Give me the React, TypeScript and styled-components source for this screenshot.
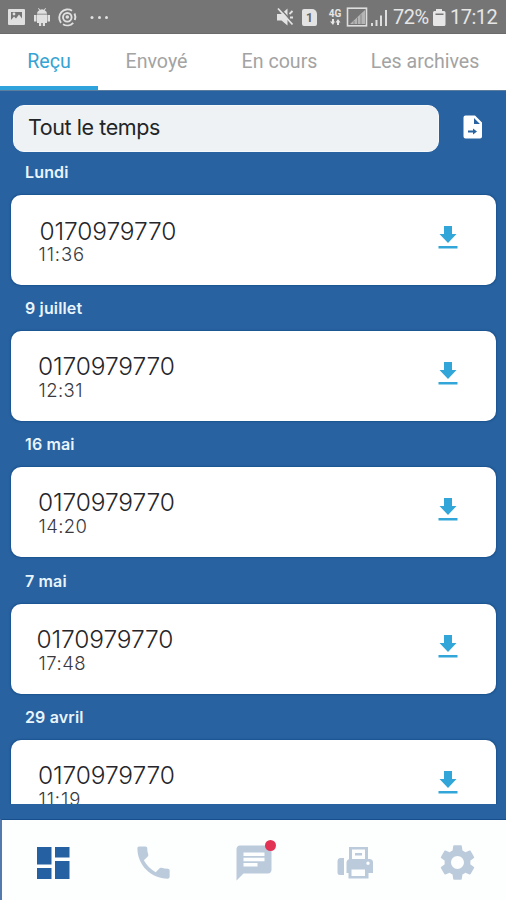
import React from 'react';
import styled, { createGlobalStyle } from 'styled-components';

const Global = createGlobalStyle`
  * { box-sizing: border-box; }
  body { margin: 0; background: #2862a0; font-family: Inter, "Noto Sans", sans-serif; }
`;

const Screen = styled.div`
  width: 506px;
  height: 900px;
  display: flex;
  flex-direction: column;
  overflow: hidden;
  background: #2862a0;
`;

const StatusBar = styled.header`
  height: 34px;
  flex: none;
  display: flex;
  align-items: center;
  justify-content: space-between;
  background: #757575;
  border-bottom: 1px solid #6b6b6b;
  color: #e6e6e6;
  font-family: Roboto, sans-serif;
`;

const StatusIcons = styled.svg`
  display: block;
  flex: none;
`;

const StatusRight = styled.div`
  display: flex;
  align-items: center;
  height: 34px;
`;

const StatusText = styled.span<{ $width: number }>`
  width: ${(p) => p.$width}px;
  font-size: 20px;
  line-height: 34px;
  padding-top: 1px;
  white-space: nowrap;
  letter-spacing: -0.5px;
`;

const Tabs = styled.nav`
  height: 57px;
  flex: none;
  display: flex;
  background: #fff;
  border-bottom: 1px solid #5c7d9e;
`;

const Tab = styled.div<{ $width: number; $active?: boolean }>`
  width: ${(p) => p.$width}px;
  height: 56px;
  display: flex;
  justify-content: center;
  font-family: Roboto, sans-serif;
  font-size: 19.6px;
  line-height: 55px;
  white-space: nowrap;
  color: ${(p) => (p.$active ? '#35a3d3' : '#a3a3a3')};
  border-bottom: ${(p) => (p.$active ? '4px solid #2fa3dc' : '0')};
`;

const FilterRow = styled.div`
  display: flex;
  align-items: center;
  padding: 14px 0 0 13px;
  gap: 21px;
  height: 61px;
  flex: none;
`;

const FilterField = styled.div`
  width: 426px;
  height: 47px;
  border-radius: 11px;
  background: #eef2f4;
  border: 1px solid #f6f9fb;
  padding-left: 14px;
  font-size: 21.5px;
  line-height: 42px;
  letter-spacing: -0.42px;
  color: #222528;
`;

const FileIcon = styled.svg`
  display: block;
  margin-bottom: 2px;
`;

const List = styled.main`
  height: 652px;
  flex: none;
  overflow: hidden;
  padding: 0 10px 0 11px;
`;

const Group = styled.section`
  height: 136.2px;
`;

const DateLabel = styled.h2`
  margin: 0;
  height: 43px;
  padding-left: 14px;
  font-size: 16px;
  font-weight: 600;
  line-height: 41px;
  letter-spacing: 0.15px;
  color: #e9f4fc;
`;

const Card = styled.article`
  height: 90px;
  display: flex;
  justify-content: space-between;
  background: #fff;
  border-radius: 10px;
  box-shadow: 0 0 1.5px 0.5px #1b5390;
  padding: 0 36px 0 27px;
`;

const Details = styled.div`
  padding-top: 21px;
`;

const PhoneNumber = styled.div<{ $dx: number; $dy: number }>`
  height: 28px;
  margin: ${(p) => p.$dy}px 0 ${(p) => -p.$dy}px ${(p) => p.$dx}px;
  font-size: 24.5px;
  font-weight: 300;
  line-height: 28px;
  letter-spacing: -0.12px;
  color: #26262a;
`;

const Time = styled.div<{ $spacing: number }>`
  padding-left: 0.5px;
  font-size: 18.5px;
  font-weight: 300;
  line-height: 20px;
  letter-spacing: ${(p) => p.$spacing}px;
  color: #3a3a3e;
`;

const DownloadIcon = styled.svg`
  display: block;
  margin-top: 30px;
  fill: #32a6d8;
`;

const BottomBar = styled.footer`
  margin-top: auto;
  height: 81px;
  flex: none;
  display: flex;
  background: #fdfefe;
  border-left: 2px solid #5479ad;
  border-top: 1px solid #164f8b;
`;

const NavItem = styled.div<{ $active?: boolean }>`
  flex: 1;
  position: relative;
  display: flex;
  justify-content: center;
  align-items: center;
  padding: 5px 0 0 1px;
  color: ${(p) => (p.$active ? '#2460a2' : '#bccbdc')};
`;

const Badge = styled.span`
  position: absolute;
  top: 20px;
  left: 61px;
  width: 11px;
  height: 11px;
  border-radius: 50%;
  background: #e23355;
`;

const NavIcon = styled.svg`
  display: block;
  fill: currentColor;
`;

const GearIcon = styled(NavIcon)`
  margin-left: 3px;
`;

const tabs = [
  { label: 'Reçu', width: 98, active: true },
  { label: 'Envoyé', width: 117 },
  { label: 'En cours', width: 129 },
  { label: 'Les archives', width: 162 },
];

const messages = [
  { date: 'Lundi', time: '11:36', dx: 1.5, dy: 0.5, spacing: 0.9 },
  { date: '9 juillet', time: '12:31', dx: 0, dy: -0.5, spacing: 0.4 },
  { date: '16 mai', time: '14:20', dx: 0, dy: -0.5, spacing: 0.4 },
  { date: '7 mai', time: '17:48', dx: -1.5, dy: 0.5, spacing: 0.5 },
  { date: '29 avril', time: '11:19', dx: 0, dy: 0.5, spacing: 0.9 },
];

function NotificationIcons() {
  return (
    <StatusIcons width="112" height="34" viewBox="0 0 112 34" fill="#e0e0e0">
      <path
        fillRule="evenodd"
        d="M9 9h15a1 1 0 0 1 1 1v14a1 1 0 0 1-1 1H9a1 1 0 0 1-1-1V10a1 1 0 0 1 1-1Zm2 3v8l3-3.500 2 2 3-4 3 4V12Z"
      />
      <circle cx="14" cy="14" r="1.4" />
      <path d="M37 14.500h10v8.500h-2v3h-2.200v-3h-1.600v3H39v-3h-2ZM34 15h2.500v6.500H34Zm13.500 0H50v6.500h-2.500ZM37 13.700a5 4 0 0 1 2.300-3.500L38 8.500l.6-.5 1.500 1.700a5 5 0 0 1 3.800 0L45.400 8l.6.5-1.300 1.700a5 4 0 0 1 2.300 3.500Z" />
      <g fill="none" stroke="#e0e0e0">
        <path strokeWidth="1.900" d="M61 22.800A8.300 8.300 0 0 1 72 10.700M74.500 13.500A8.300 8.300 0 0 1 74.800 20M73.200 22.800A8.300 8.300 0 0 1 63 24.300" />
        <circle cx="67.300" cy="17.300" r="4.300" strokeWidth="1.900" />
      </g>
      <circle cx="67.300" cy="17" r="1.800" />
      <circle cx="92" cy="17.500" r="1.500" />
      <circle cx="99.500" cy="17.500" r="1.500" />
      <circle cx="106.500" cy="17.500" r="1.500" />
    </StatusIcons>
  );
}

const SimBadge = styled.span`
  width: 15px;
  height: 17px;
  border-radius: 2px;
  border-top-right-radius: 5px;
  background: #e3e3e3;
  color: #666;
  font-size: 12px;
  font-weight: 700;
  line-height: 18px;
  text-align: center;
  margin: 1px 11px 0 8px;
`;

const NetworkBadge = styled.span`
  width: 14px;
  height: 20px;
  display: flex;
  flex-direction: column;
  align-items: center;
  font-size: 10px;
  font-weight: 700;
  line-height: 11px;
  margin: 3px 4px 0 0;
`;

function MuteIcon() {
  return (
    <StatusIcons width="18" height="34" viewBox="276 0 18 34" fill="#e3e3e3">
      <path d="M277 14h4.500l6-5.500v17l-6-5H277Z" />
      <path d="m279.500 8 14 15" stroke="#757575" strokeWidth="1.500" />
      <path d="m278 8.500 14.500 16M289.500 14l3-3M290 17.500h3" stroke="#e3e3e3" strokeWidth="1.800" />
    </StatusIcons>
  );
}

function SignalIcons() {
  return (
    <StatusIcons width="47" height="34" viewBox="346 0 47 34" fill="#dedede">
      <rect x="347.500" y="8.200" width="19" height="17.600" fill="none" stroke="#dedede" strokeWidth="1.600" />
      <path d="m350 24 15-14v14Z" opacity=".6" />
      <path d="M354 21v3M357.500 17.500V24M361 14.500V24" stroke="#757575" strokeWidth=".7" />
      <path d="M371 23h2v3h-2ZM375.500 20h2v6h-2ZM380 15.500h2V26h-2ZM385 10h2v16h-2Z" />
    </StatusIcons>
  );
}

function BatteryIcon() {
  return (
    <StatusIcons width="19" height="34" viewBox="431 0 19 34" fill="#e6e6e6">
      <path fillRule="evenodd" d="M436 9h6v2h2a1.500 1.500 0 0 1 1.500 1.500v12a1.500 1.500 0 0 1-1.500 1.500h-9.500a1.500 1.500 0 0 1-1.500-1.500v-12a1.500 1.500 0 0 1 1.500-1.500H436Zm-.5 4.500V15h8v-1.500Z" />
    </StatusIcons>
  );
}

export default function App() {
  return (
    <Screen>
      <Global />
      <StatusBar>
        <NotificationIcons />
        <StatusRight>
          <MuteIcon />
          <SimBadge>1</SimBadge>
          <NetworkBadge>
            4G
            <svg width="12" height="6" viewBox="0 0 12 6" fill="currentColor">
              <path d="M3 0v2.500H1L4 6l2-3.500H5V0ZM8 6V3.500H6.500L9 0l2.500 3.500H10V6Z" />
            </svg>
          </NetworkBadge>
          <SignalIcons />
          <StatusText $width={38}>72%</StatusText>
          <BatteryIcon />
          <StatusText $width={56}>17:12</StatusText>
        </StatusRight>
      </StatusBar>
      <Tabs>
        {tabs.map((t) => (
          <Tab key={t.label} $width={t.width} $active={t.active}>
            {t.label}
          </Tab>
        ))}
      </Tabs>
      <FilterRow>
        <FilterField>Tout le temps</FilterField>
        <FileIcon width="25" height="26" viewBox="460 114 25 26">
          <path
            fill="#fff"
            fillRule="evenodd"
            d="M465.500 114.500h9.500l7 7V135.500a2 2 0 0 1-2 2h-14.500a2 2 0 0 1-2-2v-19a2 2 0 0 1 2-2Zm8.500 2.500v6h6Zm-6 12.500v2h5v2l4-3-4-3v2Z"
          />
        </FileIcon>
      </FilterRow>
      <List>
        {messages.map((m) => (
          <Group key={m.date}>
            <DateLabel>{m.date}</DateLabel>
            <Card>
              <Details>
                <PhoneNumber $dx={m.dx} $dy={m.dy}>0170979770</PhoneNumber>
                <Time $spacing={m.spacing}>{m.time}</Time>
              </Details>
              <DownloadIcon width="23" height="26" viewBox="0 0 23 26">
                <path d="M7 1h8v8h4.500L11 18 2.500 9H7ZM1.500 21h19v2.600h-19Z" />
              </DownloadIcon>
            </Card>
          </Group>
        ))}
      </List>
      <BottomBar>
        <NavItem $active>
          <NavIcon width="34" height="34" viewBox="0 0 34 34">
            <path d="M1 1h14.500v17.500H1ZM19 1h14.500v10.500H19ZM1 22h14.500v11H1ZM19 15h14.500v18H19Z" />
          </NavIcon>
        </NavItem>
        <NavItem>
          <NavIcon width="43" height="43" viewBox="0 0 24 24">
            <path d="M6.620 10.790c1.440 2.830 3.760 5.140 6.590 6.590l2.200-2.200c.27-.27.67-.36 1.020-.24 1.120.37 2.330.57 3.570.57.55 0 1 .45 1 1V20c0 .55-.45 1-1 1-9.390 0-17-7.610-17-17 0-.55.45-1 1-1h3.500c.55 0 1 .45 1 1 0 1.250.2 2.450.57 3.570.11.35.03.74-.25 1.020z" />
          </NavIcon>
        </NavItem>
        <NavItem>
          <NavIcon width="42" height="42" viewBox="0 0 24 24">
            <path d="M20 2H4c-1.100 0-1.990.9-1.990 2L2 22l4-4h14c1.100 0 2-.9 2-2V4c0-1.100-.9-2-2-2zM6 9h12v2H6V9zm8 5H6v-2h8v2zm4-6H6V6h12v2z" />
          </NavIcon>
          <Badge />
        </NavItem>
        <NavItem>
          <NavIcon width="36" height="34" viewBox="0 0 36 34">
            <path
              fillRule="evenodd"
              d="M3 12h4v17H3a2.500 2.500 0 0 1-2.500-2.500V15A3 3 0 0 1 3 12ZM12 1h19v12h1.500a3.500 3.500 0 0 1 3.500 3.500V27h-4.500v5.500h-20V27H9.500V16a4 4 0 0 1 2.500-3V1Zm3 2.500V13h13V3.500ZM18 7h7v2.500h-7ZM14.500 23.500v6.500h13.500v-6.500Zm16.500-8a1.700 1.700 0 1 0 0 3.400 1.700 1.700 0 0 0 0-3.400Z"
            />
          </NavIcon>
        </NavItem>
        <NavItem>
          <GearIcon width="43" height="43" viewBox="0 0 24 24">
            <path d="M19.140 12.940c.04-.3.06-.61.06-.94 0-.32-.02-.64-.07-.94l2.030-1.580c.18-.14.23-.41.12-.61l-1.920-3.320c-.12-.22-.37-.29-.59-.22l-2.390.96c-.5-.38-1.030-.7-1.620-.94l-.36-2.540c-.04-.24-.24-.41-.48-.41h-3.840c-.24 0-.43.17-.47.41l-.36 2.540c-.59.24-1.130.57-1.620.94l-2.390-.96c-.22-.08-.47 0-.59.22L2.740 8.870c-.12.21-.08.47.12.61l2.030 1.580c-.05.3-.09.63-.09.94s.02.64.07.94l-2.030 1.580c-.18.14-.23.41-.12.61l1.920 3.320c.12.22.37.29.59.22l2.390-.96c.5.38 1.030.7 1.620.94l.36 2.540c.05.24.24.41.48.41h3.840c.24 0 .44-.17.47-.41l.36-2.540c.59-.24 1.130-.56 1.620-.94l2.390.96c.22.08.47 0 .59-.22l1.920-3.320c.12-.22.07-.47-.12-.61l-2.010-1.580zM12 15.600c-1.980 0-3.600-1.620-3.600-3.600s1.620-3.600 3.600-3.600 3.600 1.620 3.600 3.600-1.620 3.600-3.600 3.600z" />
          </GearIcon>
        </NavItem>
      </BottomBar>
    </Screen>
  );
}
